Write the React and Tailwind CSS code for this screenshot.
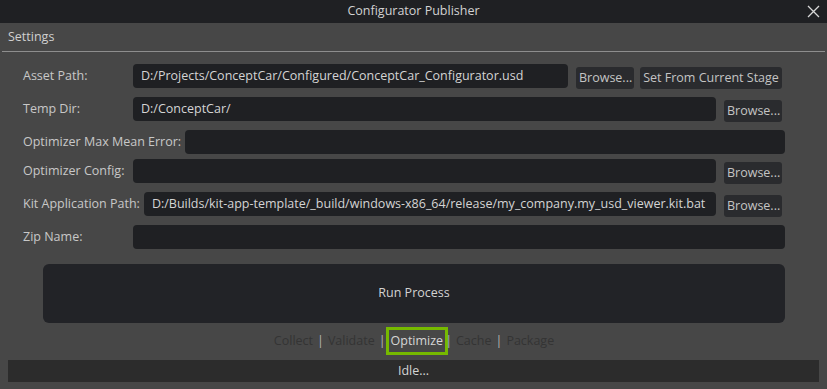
import React from "react";

const Button = ({ children, className = "" }) => (
  <button
    className={
      "h-[22px] mt-[3px] px-[3px] rounded-[3px] bg-[#2a2b2e] text-[#c4c4c4] text-[12.5px] leading-none whitespace-nowrap " +
      className
    }
  >
    {children}
  </button>
);

const Field = ({ value, className = "" }) => (
  <div
    className={
      "h-6 rounded-[4px] bg-[#1f2023] text-[#d4d4d4] text-[12.5px] flex items-center px-2 whitespace-nowrap overflow-hidden " +
      className
    }
  >
    {value}
  </div>
);

const Label = ({ children }) => (
  <div className="min-w-[110px] h-6 flex items-center text-[12.5px] text-[#c8c8c8] whitespace-nowrap pr-[4px]">
    {children}
  </div>
);

const steps = ["Collect", "Validate", "Optimize", "Cache", "Package"];

export default function App() {
  return (
    <div
      className="w-[827px] h-[389px] bg-[#474747] flex flex-col overflow-hidden"
      style={{ fontFamily: '"Open Sans", "Noto Sans", sans-serif' }}
    >
      {/* title bar */}
      <div className="relative h-[23px] bg-[#1f2023] flex items-center justify-center text-[12.5px] text-[#d2d2d2]">
        Configurator Publisher
        <svg
          className="absolute right-[7px] top-[5px]"
          width="13"
          height="13"
          viewBox="0 0 13 13"
        >
          <path d="M1 1L12 12M12 1L1 12" stroke="#d8d8d8" strokeWidth="1.3" />
        </svg>
      </div>

      {/* collapsable header */}
      <div className="h-[28px] px-2 flex items-center text-[12.5px] text-[#d0d0d0]">
        Settings
      </div>
      <div className="mx-[2px] h-px bg-[#8e8e8e]" />

      {/* form */}
      <div className="pl-[23px] pr-[42px] pt-3 flex flex-col">
        <div className="flex items-start">
          <Label>Asset Path:</Label>
          <Field value="D:/Projects/ConceptCar/Configured/ConceptCar_Configurator.usd" className="w-[435px]" />
          <Button className="ml-2 w-[58px]">Browse...</Button>
          <Button className="ml-[6px] w-[142px]">Set From Current Stage</Button>
        </div>
        <div className="flex items-start mt-2">
          <Label>Temp Dir:</Label>
          <Field value="D:/ConceptCar/" className="flex-1" />
          <Button className="ml-2 mr-[3px] w-[58px]">Browse...</Button>
        </div>
        <div className="flex items-start mt-2">
          <Label>Optimizer Max Mean Error:</Label>
          <Field value="" className="flex-1" />
        </div>
        <div className="flex items-start mt-[5px]">
          <Label>Optimizer Config:</Label>
          <Field value="" className="flex-1" />
          <Button className="ml-2 mr-[3px] w-[58px]">Browse...</Button>
        </div>
        <div className="flex items-start mt-2">
          <Label>Kit Application Path:</Label>
          <Field
            value="D:/Builds/kit-app-template/_build/windows-x86_64/release/my_company.my_usd_viewer.kit.bat"
            className="flex-1"
          />
          <Button className="ml-2 mr-[3px] w-[58px]">Browse...</Button>
        </div>
        <div className="flex items-start mt-2">
          <Label>Zip Name:</Label>
          <Field value="" className="flex-1" />
        </div>
      </div>

      {/* run */}
      <div className="ml-[43px] mr-[42px] mt-[15px] h-[59px] rounded-[6px] bg-[#222327] flex items-center justify-center text-[12.5px] text-[#d2d2d2]">
        Run Process
      </div>

      {/* steps */}
      <div className="mt-1 h-[28px] flex items-center justify-center text-[12.5px] pl-[1px]">
        {steps.map((s, i) => (
          <React.Fragment key={s}>
            {i > 0 && <span className="text-[#b4b4b4] px-[4px]">|</span>}
            {s === "Optimize" ? (
              <span className="-ml-[4px] -mr-[7px] border-[3px] border-[#76b900] px-[2px] h-[28px] flex items-center text-[#d6d6d6]">
                {s}
              </span>
            ) : (
              <span className="text-[#343434]">{s}</span>
            )}
          </React.Fragment>
        ))}
      </div>

      {/* status */}
      <div className="mx-[8px] mt-[5px] h-[22px] bg-[#2c2c2c] flex items-center justify-center text-[12.5px] text-[#d4d4d4]">
        Idle...
      </div>
    </div>
  );
}
